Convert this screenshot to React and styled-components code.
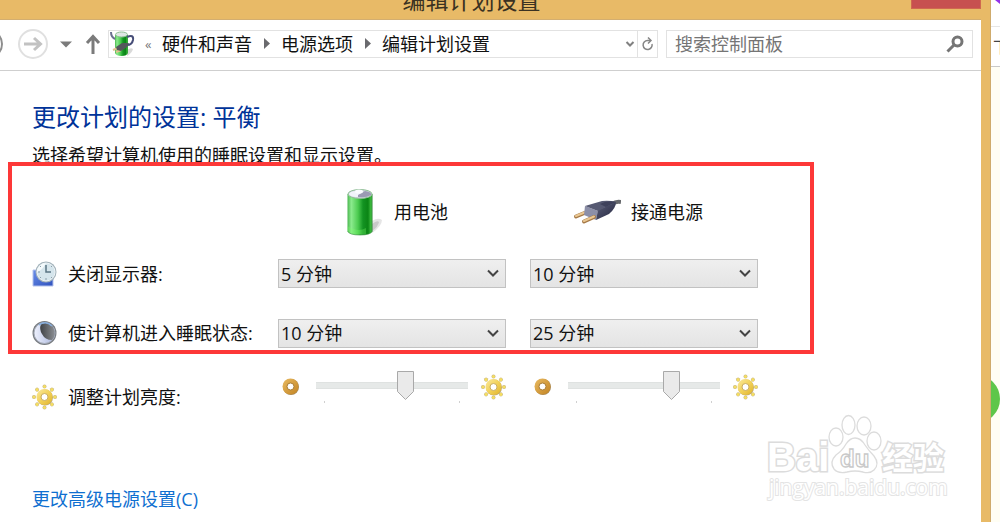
import React, { useState } from 'react';
import styled, { createGlobalStyle } from 'styled-components';

const GlobalStyle = createGlobalStyle`
* {
box-sizing: border-box;
}
body {
margin: 0;
overflow-x: hidden;
background: white;
font-family: "Open Sans", "Noto Sans CJK SC", sans-serif;
font-size: 18px;
line-height: 24px;
color: #111;
}
button, input, select {
font: inherit;
color: inherit;
margin: 0;
}
`
const Desktop = styled.div`
display: flex;
min-height: 100vh;
`
const Window = styled.div`
flex: 1;
min-width: 0;
display: flex;
flex-direction: column;
background: #e8ba67;
border-right: 1px solid #cfab6c;
padding-right: 9px;
`
const TitleBar = styled.header`
position: relative;
display: flex;
justify-content: center;
align-items: flex-end;
height: 20px;
padding-bottom: 7px;
border-bottom: 1px solid #d3ae70;
overflow: hidden;
`
const Title = styled.h1`
margin: 0;
padding-right: 38px;
font-size: 23px;
line-height: 24px;
font-weight: 400;
color: #3b3222;
`
const CloseButton = styled.button`
position: absolute;
top: 0;
right: 0;
width: 70px;
height: 9px;
padding: 0;
border: 1px solid #d0684f;
border-top: 0;
background: #c75050;
`
const Body = styled.div`
flex: 1;
position: relative;
display: flex;
flex-direction: column;
background: white;
`
const Toolbar = styled.div`
display: flex;
align-items: center;
height: 51px;
padding-right: 8px;
padding-bottom: 2px;
border-bottom: 1px solid #cfcfcf;
`
const RoundButton = styled.button`
display: flex;
align-items: center;
justify-content: center;
flex: none;
width: 30px;
height: 30px;
padding: 0;
border: 2px solid ${props => props.$dark ? '#8e8e8e' : '#e0e0e0'};
border-radius: 50%;
background: white;
margin-left: ${props => props.$dark ? '-27px' : '15px'};
`
const PlainButton = styled.button`
display: flex;
align-items: center;
justify-content: center;
flex: none;
width: ${props => props.$width}px;
height: 26px;
padding: 0;
border: 0;
background: none;
`
const AddressBar = styled.nav`
display: flex;
align-items: center;
flex: 1;
min-width: 0;
height: 28px;
margin-left: 7px;
border: 1px solid #e2e2e2;
`
const Crumb = styled.button`
padding: 0;
border: 0;
background: none;
white-space: nowrap;
`
const More = styled.span`
width: 27px;
padding-left: 10px;
font-size: 13px;
line-height: 20px;
color: #777;
`
const Spacer = styled.div`
flex: 1;
`
const Refresh = styled(PlainButton)`
border-left: 1px solid #e2e2e2;
`
const SearchBox = styled.label`
display: flex;
align-items: center;
flex: 0 1 307px;
height: 28px;
margin-left: 8px;
padding: 0 8px;
border: 1px solid #e2e2e2;
`
const SearchInput = styled.input`
flex: 1;
min-width: 0;
padding: 0;
border: 0;
outline: 0;
background: none;
&::placeholder {
color: #757575;
opacity: 1;
}
`
const Content = styled.main`
padding: 30px 32px 11px;
`
const Heading = styled.h2`
margin: 0 0 10px;
font-size: 24px;
line-height: 32px;
font-weight: 400;
color: #003399;
`
const Intro = styled.p`
margin: 0;
`
const Settings = styled.form`
position: relative;
display: grid;
grid-template-columns: 222px 228px 228px;
grid-template-rows: 64px 59px 60px 67px;
column-gap: 24px;
align-items: center;
padding-top: 13px;
`
const Highlight = styled.div`
position: absolute;
top: -5px;
left: -24px;
width: 806px;
height: 192px;
border: 4px solid #fd3838;
pointer-events: none;
`
const ColumnHead = styled.div`
grid-column: ${props => props.$column};
display: flex;
align-items: center;
gap: 10px;
padding-left: ${props => props.$indent}px;
`
const RowLabel = styled.label`
display: flex;
align-items: center;
gap: 11px;
white-space: nowrap;
`
const SelectBox = styled.div`
display: grid;
align-items: center;
`
const Select = styled.select`
grid-area: 1 / 1;
appearance: none;
width: 100%;
height: 29px;
padding: 0 30px 0 2px;
border: 1px solid #c2c2c2;
border-radius: 0;
background: linear-gradient(#efefef, #e4e4e4);
`
const SelectArrow = styled.svg`
grid-area: 1 / 1;
justify-self: end;
margin-right: 7px;
pointer-events: none;
`
const SliderCell = styled.div`
display: flex;
align-self: start;
padding-top: 8px;
padding-left: 3px;
`
const SliderTrack = styled.div`
display: flex;
flex-direction: column;
width: 153px;
margin: 0 13px 0 16px;
`
const thumb = `url("data:image/svg+xml,%3Csvg xmlns='http://www.w3.org/2000/svg' width='17' height='29'%3E%3Cpath d='M.5.5h16v20l-8 8-8-8z' fill='%23eaeaea' stroke='%23a9a9a9'/%3E%3C/svg%3E")`
const Range = styled.input`
appearance: none;
width: 100%;
height: 29px;
background: none;
&::-webkit-slider-runnable-track {
height: 7px;
background: #e6e9e8;
border: 1px solid #dfe2e1;
border-width: 1px 0;
}
&::-webkit-slider-thumb {
appearance: none;
width: 17px;
height: 29px;
margin-top: -12px;
background: ${thumb};
}
`
const Ticks = styled.div`
display: flex;
justify-content: space-between;
height: 4px;
margin: 0 8px;
padding-top: 1px;
&::before, &::after {
content: "";
width: 1px;
height: 2px;
background: #d0d0d0;
}
`
const SliderIcon = styled.span`
display: flex;
align-items: center;
height: 32px;
`
const AdvancedLink = styled.a`
display: inline-block;
margin-top: 57px;
color: #0f6fd0;
text-decoration: none;
`
const Watermark = styled.svg`
position: absolute;
right: 31px;
bottom: 16px;
pointer-events: none;
`
const Background = styled.aside`
position: relative;
flex: none;
width: 9px;
overflow: hidden;
background: #fffef4;
`
const BackgroundTop = styled.div`
height: 27px;
background: white;
border-bottom: 1px solid #e6e6e6;
`
const BackgroundTab = styled.div`
height: 40px;
padding-top: 8px;
padding-left: 2px;
font-size: 16px;
white-space: nowrap;
color: #444;
background: white;
border-bottom: 1px solid #c9c9c9;
`
const GreenBall = styled.div`
width: 48px;
height: 48px;
margin-top: 308px;
margin-left: -39px;
border-radius: 50%;
background: #5ec64a;
`
const PurpleCorner = styled.svg`
position: absolute;
top: 0;
right: 0;
`

function Gradients() {
    return (
        <svg width="0" height="0" style={{ position: 'absolute' }}>
            <defs>
                <linearGradient id="cell">
                    <stop offset="0" stopColor="#4ab64f" />
                    <stop offset="0.15" stopColor="#8ceb8e" />
                    <stop offset="0.42" stopColor="#4ccb50" />
                    <stop offset="0.62" stopColor="#139322" />
                    <stop offset="0.82" stopColor="#0b8515" />
                    <stop offset="0.94" stopColor="#3fbd40" />
                    <stop offset="1" stopColor="#277e30" />
                </linearGradient>
                <linearGradient id="plug" x1="0" y1="0" x2="1" y2="1">
                    <stop offset="0" stopColor="#5d607a" />
                    <stop offset="1" stopColor="#24263f" />
                </linearGradient>
                <linearGradient id="screen" x1="0" y1="0" x2="1" y2="1">
                    <stop offset="0" stopColor="#6a8fea" />
                    <stop offset="1" stopColor="#2f51bd" />
                </linearGradient>
                <linearGradient id="moon">
                    <stop offset="0" stopColor="#eef1fd" />
                    <stop offset="1" stopColor="#a9b6dd" />
                </linearGradient>
                <linearGradient id="night">
                    <stop offset="0" stopColor="#3f4246" />
                    <stop offset="1" stopColor="#8b8e92" />
                </linearGradient>
                <linearGradient id="sun" x1="0" y1="0" x2="1" y2="1">
                    <stop offset="0" stopColor="#faeaa0" />
                    <stop offset="0.5" stopColor="#f2d25a" />
                    <stop offset="1" stopColor="#e0b22a" />
                </linearGradient>
                <linearGradient id="dim" x1="0" y1="0" x2="1" y2="1">
                    <stop offset="0" stopColor="#e9bb62" />
                    <stop offset="1" stopColor="#c28322" />
                </linearGradient>
            </defs>
        </svg>
    )
}
function BatteryIcon() {
    return (
        <svg width="48" height="48" viewBox="0 0 48 48">
            <path d="M36 33 Q42 29 46 32 Q46 38 36 45 Z" fill="#000" opacity="0.1" />
            <path d="M36 36 Q41 32 43 34 Q42 39 36 43 Z" fill="#000" opacity="0.12" />
            <path d="M11.500 6 V43 Q13 47 24 47 Q35 47 36.500 43 V6 Z" fill="url(#cell)" />
            <path d="M11.500 38 Q22 45 30 40 L30 46 Q13 48 11.500 43 Z" fill="#7dff6a" opacity="0.3" />
            <path d="M11.500 43 Q13 47 24 47 Q35 47 36.500 43" fill="none" stroke="#2f8a37" opacity="0.6" />
            <ellipse cx="24" cy="6" rx="12" ry="4.500" fill="#cdd3dc" stroke="#8fbf95" />
            <ellipse cx="20" cy="6" rx="7" ry="3" fill="#f1f3fa" />
            <path d="M22 7 L29 3 Q36 4 35 7 Q30 10 22 9 Z" fill="#9b9ab4" />
            <ellipse cx="23" cy="3.500" rx="4" ry="2" fill="#fafbff" />
        </svg>
    )
}
function PlugIcon() {
    return (
        <svg width="48" height="48" viewBox="0 0 48 48">
            <path d="M39 16 Q43 13 48 14" fill="none" stroke="#66686c" strokeWidth="4" />
            <path d="M3 28.500 L15 23.500" stroke="#a67a48" strokeWidth="4" strokeLinecap="round" />
            <path d="M3 28 L15 23" stroke="#eac792" strokeWidth="2" strokeLinecap="round" />
            <path d="M12 18 L25 23 L23 32 L11 27 Z" fill="#8c8fa8" />
            <path d="M11 33.500 L21 29" stroke="#a67a48" strokeWidth="4" strokeLinecap="round" />
            <path d="M11 33 L21 28.500" stroke="#eac792" strokeWidth="2" strokeLinecap="round" />
            <path d="M25 22 L43 14 Q43 20 36 26 L23 32 Z" fill="url(#plug)" />
            <path d="M12 18 L29 13 Q36 12 43 14 L25 23 Z" fill="#565972" />
            <path d="M27 16 Q34 12 43 14 L33 19 Z" fill="#3e415b" />
        </svg>
    )
}
function PowerIcon() {
    return (
        <svg width="26" height="26" viewBox="0 0 26 26">
            <path d="M18 19 Q22 16 24 18 Q23 22 18 25 Z" fill="#000" opacity="0.15" />
            <path d="M6 4 V22 Q7 25 12.500 25 Q18 25 19 22 V4 Z" fill="url(#cell)" />
            <ellipse cx="12.500" cy="3.500" rx="6" ry="2.500" fill="#dfe6e4" stroke="#8fbf95" />
            <path d="M2 1 Q2 6 6 8" fill="none" stroke="#6a7090" strokeWidth="2" />
            <path d="M18 6 Q25 3 24 9 Q23 14 18 14" fill="none" stroke="#474e78" strokeWidth="2" />
            <path d="M4 19 L9 17 M7 21 L12 19" stroke="#e2c08e" strokeWidth="2" />
            <path d="M7 16 L13 12 L20 12 L18 16 L12 20 L8 19 Z" fill="#54575c" />
        </svg>
    )
}
function ClockIcon() {
    return (
        <svg width="25" height="26" viewBox="0 0 25 26">
            <path d="M1 9 H21 V25 H1 Z" fill="url(#screen)" stroke="#b4c2ec" />
            <circle cx="14" cy="11" r="10.500" fill="#a3b3bb" />
            <circle cx="14" cy="11" r="9" fill="#d5e5ec" stroke="#eef4f7" />
            <path d="M14 2 A9 9 0 0 0 5 11 Q10 10 14 2 Z" fill="#f4fafc" />
            <path d="M14 4 V11 H19" fill="none" stroke="#5a7482" strokeWidth="1.500" />
            <path d="M6 11 H8 M14 17 V19 M8 5 L9 6 M8 17 L9 16 M20 17 L19 16 M20 5 L19 6" stroke="#8ba0ac" />
        </svg>
    )
}
function MoonIcon() {
    return (
        <svg width="25" height="26" viewBox="0 0 25 26">
            <circle cx="12.500" cy="13" r="12" fill="#777b80" />
            <circle cx="12.500" cy="13" r="10.500" fill="url(#moon)" stroke="#a6adba" />
            <path d="M9 4 Q16 1 21 7 Q25 15 20 20 Q13 20 10 14 Q7 9 9 4 Z" fill="url(#night)" />
            <path d="M7 5 Q14 0 20 6" fill="none" stroke="#86aede" strokeWidth="1.500" />
        </svg>
    )
}
const rays = [0, 45, 90, 135, 180, 225, 270, 315]
function SunIcon() {
    return (
        <svg width="25" height="26" viewBox="0 0 25 26">
            {rays.map(angle => (
                <g key={angle} transform={`rotate(${angle} 12.5 13)`}>
                    <circle cx="12.500" cy="2.500" r="2" fill="#c9b98a" />
                    <circle cx="12.500" cy="2.500" r="1.500" fill="#f5de62" />
                </g>
            ))}
            <circle cx="13" cy="13.500" r="8" fill="#bda873" />
            <circle cx="12.500" cy="13" r="8" fill="url(#sun)" />
            <circle cx="12.500" cy="13" r="3.500" fill="#fff" stroke="#c9ad62" />
        </svg>
    )
}
function DimIcon() {
    return (
        <svg width="19" height="20" viewBox="0 0 19 20">
            <circle cx="10" cy="10" r="8" fill="#a68a5c" />
            <circle cx="9.500" cy="9.500" r="8" fill="url(#dim)" />
            <circle cx="9.500" cy="9.500" r="3.500" fill="#fff" stroke="#a87c36" />
        </svg>
    )
}
function CrumbArrow() {
    return (
        <svg width="29" height="12" viewBox="0 0 29 12">
            <path d="M12 0 L18 5.500 L12 11 Z" fill="#6a6a6e" />
        </svg>
    )
}

function TimeSelect({ id, label, value }) {
    const [time, setTime] = useState(value)
    return (
        <SelectBox>
            <Select id={id} aria-label={label} value={time} onChange={e => setTime(e.target.value)}>
                <option>5 分钟</option>
                <option>10 分钟</option>
                <option>25 分钟</option>
            </Select>
            <SelectArrow width="12" height="9" viewBox="0 0 12 9">
                <path d="M1 1.500 L6 6.500 L11 1.500" fill="none" stroke="#444" strokeWidth="2" />
            </SelectArrow>
        </SelectBox>
    )
}
function Brightness({ id, label, value }) {
    return (
        <SliderCell>
            <SliderIcon><DimIcon /></SliderIcon>
            <SliderTrack>
                <Range id={id} type="range" aria-label={label} min="0" max="100" defaultValue={value} />
                <Ticks />
            </SliderTrack>
            <SliderIcon><SunIcon /></SliderIcon>
        </SliderCell>
    )
}
function NavigationBar() {
    return (
        <Toolbar>
            <RoundButton $dark aria-label="返回" />
            <RoundButton aria-label="前进">
                <svg width="20" height="16" viewBox="0 0 20 16">
                    <path d="M1 8 H17 M11 2 L17.500 8 L11 14" fill="none" stroke="#c2c2c2" strokeWidth="3" />
                </svg>
            </RoundButton>
            <PlainButton $width={36} aria-label="最近浏览的位置">
                <svg width="12" height="7" viewBox="0 0 12 7">
                    <path d="M0 0.500 H12 L6 6.500 Z" fill="#7b7b7b" />
                </svg>
            </PlainButton>
            <PlainButton $width={17} aria-label="上移">
                <svg width="16" height="20" viewBox="0 0 16 20">
                    <path d="M8 20 V2 M2 9 L8 2.500 L14 9" fill="none" stroke="#7b7b7b" strokeWidth="3" />
                </svg>
            </PlainButton>
            <AddressBar>
                <PowerIcon />
                <More>«</More>
                <Crumb>硬件和声音</Crumb>
                <CrumbArrow />
                <Crumb>电源选项</Crumb>
                <CrumbArrow />
                <Crumb>编辑计划设置</Crumb>
                <Spacer />
                <PlainButton $width={14} aria-label="展开">
                    <svg width="10" height="8" viewBox="0 0 10 8">
                        <path d="M1.500 2 L5 5.500 L8.500 2" fill="none" stroke="#808080" strokeWidth="2" />
                    </svg>
                </PlainButton>
                <Refresh $width={20} aria-label="刷新">
                    <svg width="12" height="14" viewBox="0 0 12 14">
                        <path d="M10 7 A4.500 4.500 0 1 1 5.500 3.500 H8" fill="none" stroke="#858585" strokeWidth="1.500" />
                        <path d="M6 0.500 L9 3.500 L6 6.500" fill="none" stroke="#858585" strokeWidth="1.500" />
                    </svg>
                </Refresh>
            </AddressBar>
            <SearchBox>
                <SearchInput type="text" aria-label="搜索控制面板" placeholder="搜索控制面板" />
                <svg width="18" height="18" viewBox="0 0 18 18">
                    <circle cx="11.500" cy="6.500" r="4.500" fill="none" stroke="#757575" strokeWidth="3" />
                    <path d="M8 10 L1.500 16.500" stroke="#757575" strokeWidth="3" />
                </svg>
            </SearchBox>
        </Toolbar>
    )
}
function BaiduMark() {
    return (
        <Watermark width="186" height="96" viewBox="0 0 186 96" fill="#fff" stroke="#dcdcdc" strokeWidth="1.300">
            <text x="3" y="61" fontSize="40" fontFamily="Liberation Sans, sans-serif" fontWeight="700" strokeWidth="3" paintOrder="stroke">Bai</text>
            <ellipse cx="72" cy="27" rx="7" ry="9" />
            <ellipse cx="84.500" cy="15" rx="6.500" ry="9.500" />
            <ellipse cx="100" cy="16" rx="7" ry="9" />
            <ellipse cx="110" cy="31" rx="7" ry="9" />
            <path d="M91 28 Q97 28 101 35 Q105 41 110 46 Q116 54 110 60 Q106 64 99 62 Q91 60 83 62 Q74 64 70 59 Q65 52 72 45 Q78 41 82 34 Q86 28 91 28 Z" />
            <text x="76" y="57" fontSize="24" fontFamily="Liberation Sans, sans-serif" fontWeight="700" stroke="#c9c9c9">du</text>
            <text x="118" y="59" fontSize="31" fontFamily="Noto Sans CJK SC, sans-serif" fontWeight="700" strokeWidth="3" paintOrder="stroke">经验</text>
            <text x="5" y="85" fontSize="21" fontFamily="Open Sans, sans-serif" strokeWidth="2" stroke="#e4e4e4" paintOrder="stroke">jingyan.baidu.com</text>
        </Watermark>
    )
}

function App() {
    return (
        <Desktop>
            <GlobalStyle />
            <Gradients />
            <Window>
                <TitleBar>
                    <Title>编辑计划设置</Title>
                    <CloseButton aria-label="关闭" />
                </TitleBar>
                <Body>
                    <NavigationBar />
                    <Content>
                        <Heading>更改计划的设置: 平衡</Heading>
                        <Intro>选择希望计算机使用的睡眠设置和显示设置。</Intro>
                        <Settings>
                            <ColumnHead $column={2} $indent={58}><BatteryIcon />用电池</ColumnHead>
                            <ColumnHead $column={3} $indent={43}><PlugIcon />接通电源</ColumnHead>
                            <RowLabel htmlFor="display"><ClockIcon />关闭显示器:</RowLabel>
                            <TimeSelect id="display" label="关闭显示器 用电池" value="5 分钟" />
                            <TimeSelect id="display-ac" label="关闭显示器 接通电源" value="10 分钟" />
                            <RowLabel htmlFor="sleep"><MoonIcon />使计算机进入睡眠状态:</RowLabel>
                            <TimeSelect id="sleep" label="使计算机进入睡眠状态 用电池" value="10 分钟" />
                            <TimeSelect id="sleep-ac" label="使计算机进入睡眠状态 接通电源" value="25 分钟" />
                            <RowLabel htmlFor="brightness"><SunIcon />调整计划亮度:</RowLabel>
                            <Brightness id="brightness" label="调整计划亮度 用电池" value={60} />
                            <Brightness id="brightness-ac" label="调整计划亮度 接通电源" value={70} />
                            <Highlight />
                        </Settings>
                        <AdvancedLink href="#advanced">更改高级电源设置(C)</AdvancedLink>
                    </Content>
                    <BaiduMark />
                </Body>
            </Window>
            <Background>
                <BackgroundTop />
                <BackgroundTab>下</BackgroundTab>
                <GreenBall />
                <PurpleCorner width="5" height="4" viewBox="0 0 5 4">
                    <path d="M0 0 H5 V4 Z" fill="#9333ea" />
                </PurpleCorner>
            </Background>
        </Desktop>
    )
}
export default App;
